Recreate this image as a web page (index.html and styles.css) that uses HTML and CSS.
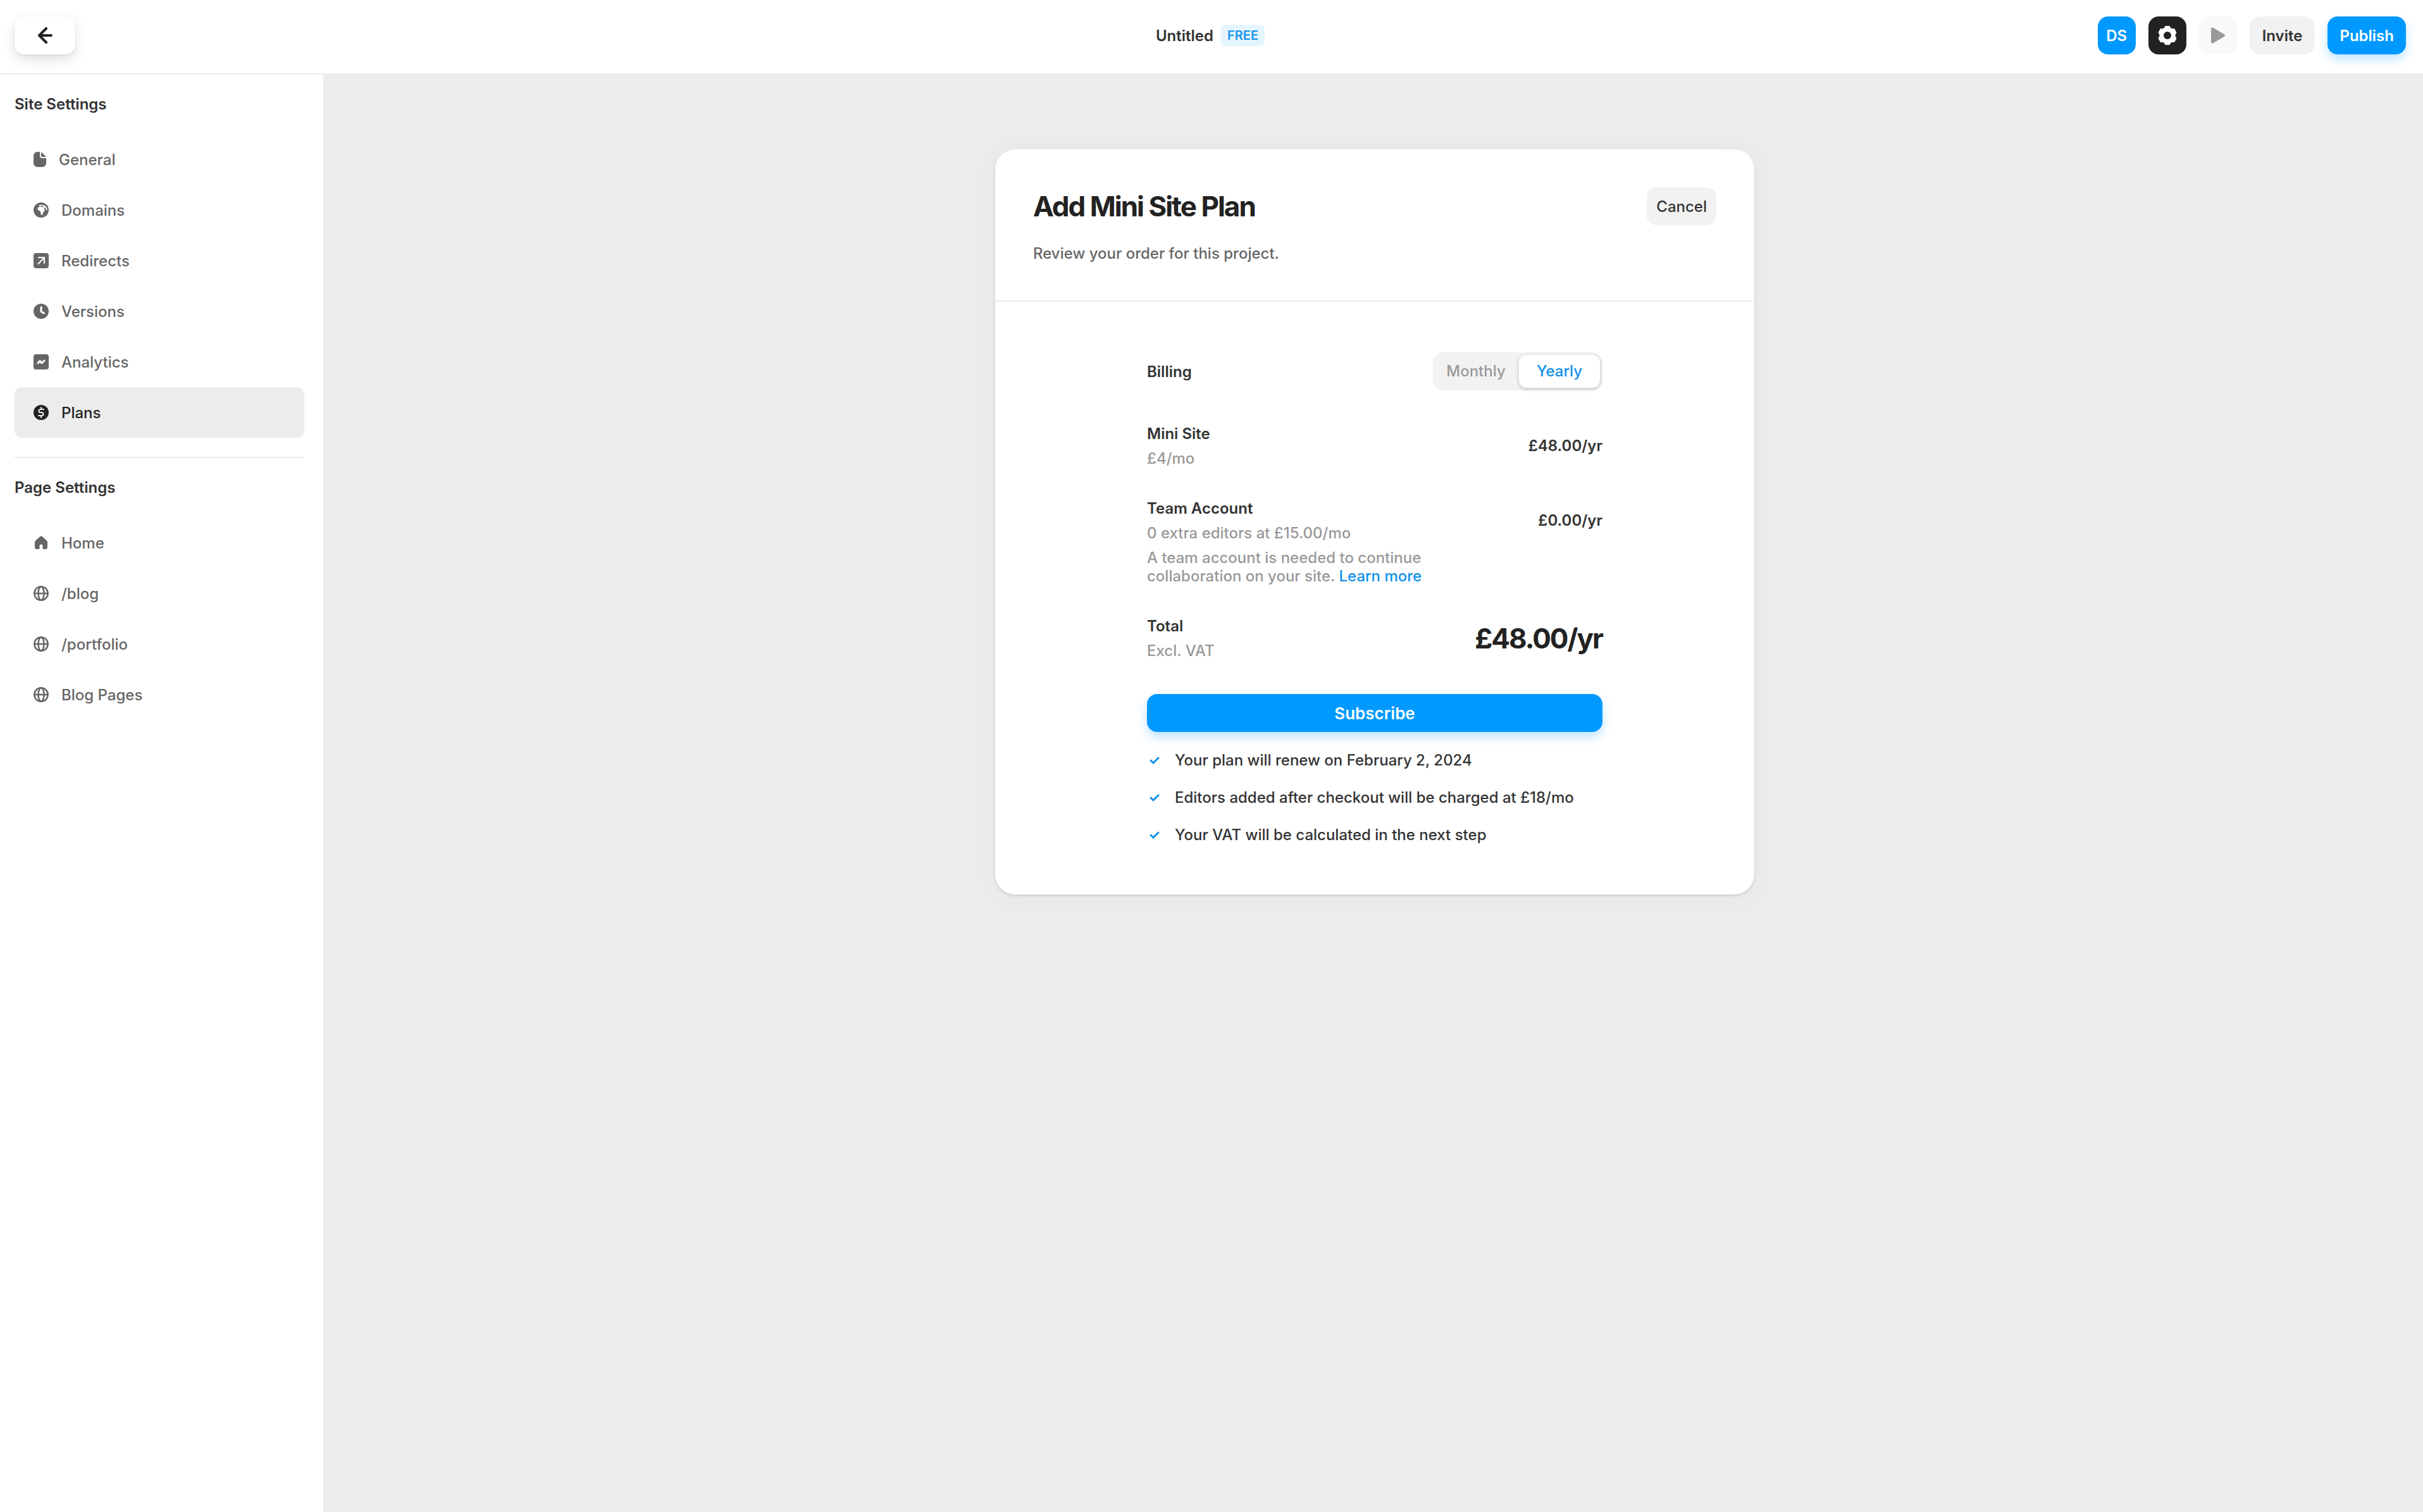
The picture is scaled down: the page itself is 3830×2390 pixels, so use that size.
FILE: index.html
```html
<!DOCTYPE html>
<html lang="en">
<head>
    <meta charset="UTF-8">
    <meta name="viewport" content="width=device-width, initial-scale=1.0">
    <title>Untitled - Plans</title>
    <link rel="stylesheet" href="styles.css">
</head>
<body>
    <header class="topbar">
        <button type="button" class="back" aria-label="Back">
            <svg width="24" height="26" viewBox="0 0 24 26" fill="none" stroke="#222" stroke-width="4" stroke-linecap="round" stroke-linejoin="round"><path d="M14 2L3 13l11 11M4 13h18"/></svg>
        </button>
        <div class="project">
            <span class="project-name">Untitled</span>
            <span class="badge">FREE</span>
        </div>
        <div class="actions">
            <button type="button" class="btn square blue">DS</button>
            <button type="button" class="btn square dark" aria-label="Settings">
                <svg width="32" height="32" viewBox="-16 -16 32 32"><path fill="#fff" stroke="#fff" stroke-width="2" stroke-linejoin="round" d="M-3-14H3Q4.600-8.600 10.400-10L13.400-4.500Q9.400 0 13.400 4.500L10.400 10Q4.600 8.600 3 14H-3Q-4.600 8.600-10.400 10L-13.400 4.500Q-9.400 0-13.400-4.500L-10.400-10Q-4.600-8.600-3-14z"/><circle r="6" fill="#222"/></svg>
            </button>
            <button type="button" class="btn square faint" aria-label="Preview">
                <svg width="24" height="26" viewBox="0 0 24 26"><path fill="#999" stroke="#999" stroke-width="4" stroke-linejoin="round" d="M3 2.500v21L21 13z"/></svg>
            </button>
            <button type="button" class="btn grey">Invite</button>
            <button type="button" class="btn blue raised">Publish</button>
        </div>
    </header>

    <div class="page">
        <aside class="sidebar">
            <h2>Site Settings</h2>
            <nav aria-label="Site Settings">
                <a href="#general">
                    <svg width="20" height="24" viewBox="0 0 20 24" fill="currentColor"><path d="M10 0v6a4 4 0 0 0 4 4h6v8a6 6 0 0 1-6 6H6a6 6 0 0 1-6-6V6a6 6 0 0 1 6-6z"/><path d="M12 0l8 8h-6a2 2 0 0 1-2-2z"/></svg>
                    General
                </a>
                <a href="#domains">
                    <svg width="24" height="24" viewBox="0 0 24 24"><circle cx="12" cy="12" r="12" fill="currentColor"/><path fill="#fff" d="M9 4q5-1 8.500.7Q21.500 7.500 22 12.500l-1.500-.5-2.500-4.500-1.500 2 1.700 2.500-2.700 3.500-1 3-1.500 1.500-1.500-1.500-.5-4.500-4-2-.7-3L9 6.500l3 .2 3 .7 1.500-.9-2-1-5.500.2z"/></svg>
                    Domains
                </a>
                <a href="#redirects">
                    <svg width="24" height="24" viewBox="0 0 24 24"><rect width="24" height="24" rx="4" fill="currentColor"/><path fill="none" stroke="#fff" stroke-width="2" stroke-linecap="round" stroke-linejoin="round" d="M8 7h9v9M17 7L7.500 17"/></svg>
                    Redirects
                </a>
                <a href="#versions">
                    <svg width="24" height="24" viewBox="0 0 24 24"><circle cx="12" cy="12" r="12" fill="currentColor"/><path fill="none" stroke="#fff" stroke-width="3" stroke-linecap="round" stroke-linejoin="round" d="M12 5.500V12.500l4.500 2.500"/></svg>
                    Versions
                </a>
                <a href="#analytics">
                    <svg width="24" height="24" viewBox="0 0 24 24"><rect width="24" height="24" rx="4" fill="currentColor"/><path fill="none" stroke="#fff" stroke-width="3" stroke-linecap="round" stroke-linejoin="round" d="M7 14l3-3.500 3 3.500 4-4"/></svg>
                    Analytics
                </a>
                <a href="#plans" class="active" aria-current="page">
                    <svg width="24" height="24" viewBox="0 0 24 24"><circle cx="12" cy="12" r="12" fill="currentColor"/><path fill="none" stroke="#ececec" stroke-width="2" stroke-linecap="round" stroke-linejoin="round" d="M12 4v3M12 17v3M16 7h-5a2.500 2.500 0 0 0 0 5h2a2.500 2.500 0 0 1 0 5H8"/></svg>
                    Plans
                </a>
            </nav>
            <h2 class="divided">Page Settings</h2>
            <nav aria-label="Page Settings">
                <a href="#home">
                    <svg width="24" height="24" viewBox="0 0 24 24"><path fill="currentColor" d="M10 2.300a3 3 0 0 1 4 0l7 6.500q1 1 1 2.500V19a3 3 0 0 1-3 3h-3a1.500 1.500 0 0 1-1.500-1.500V17a2.500 2.500 0 0 0-5 0v3.500A1.500 1.500 0 0 1 8 22H5a3 3 0 0 1-3-3v-7.700q0-1.500 1-2.500z"/></svg>
                    Home
                </a>
                <a href="#blog">
                    <svg width="24" height="24" viewBox="0 0 24 24" fill="none" stroke="currentColor" stroke-width="2.500"><circle cx="12" cy="12" r="10.700"/><ellipse cx="12" cy="12" rx="4.500" ry="10.700"/><path d="M1 12h22"/></svg>
                    /blog
                </a>
                <a href="#portfolio">
                    <svg width="24" height="24" viewBox="0 0 24 24" fill="none" stroke="currentColor" stroke-width="2.500"><circle cx="12" cy="12" r="10.700"/><ellipse cx="12" cy="12" rx="4.500" ry="10.700"/><path d="M1 12h22"/></svg>
                    /portfolio
                </a>
                <a href="#blog-pages">
                    <svg width="24" height="24" viewBox="0 0 24 24" fill="none" stroke="currentColor" stroke-width="2.500"><circle cx="12" cy="12" r="10.700"/><ellipse cx="12" cy="12" rx="4.500" ry="10.700"/><path d="M1 12h22"/></svg>
                    Blog Pages
                </a>
            </nav>
        </aside>

        <main class="content">
            <form class="card">
                <div class="card-header">
                    <div class="card-title">
                        <h1>Add Mini Site Plan</h1>
                        <button type="button" class="btn grey cancel">Cancel</button>
                    </div>
                    <p>Review your order for this project.</p>
                </div>
                <div class="card-body">
                    <div class="billing" role="radiogroup" aria-labelledby="billing-label">
                        <strong id="billing-label">Billing</strong>
                        <div class="toggle">
                            <input type="radio" name="billing" id="monthly" value="monthly">
                            <label for="monthly">Monthly</label>
                            <input type="radio" name="billing" id="yearly" value="yearly" checked>
                            <label for="yearly">Yearly</label>
                        </div>
                    </div>

                    <div class="order">
                        <div class="row">
                            <div class="item">
                                <strong>Mini Site</strong>
                                <span>£4/mo</span>
                            </div>
                            <strong class="price">£48.00/yr</strong>
                        </div>
                        <div class="row">
                            <div class="item">
                                <strong>Team Account</strong>
                                <span>0 extra editors at £15.00/mo</span>
                                <p>A team account is needed to continue collaboration on your site. <a href="#learn-more">Learn more</a></p>
                            </div>
                            <strong class="price">£0.00/yr</strong>
                        </div>
                        <div class="row">
                            <div class="item">
                                <strong>Total</strong>
                                <span>Excl. VAT</span>
                            </div>
                            <strong class="price total">£48.00/yr</strong>
                        </div>
                    </div>

                    <button type="submit" class="btn blue raised subscribe">Subscribe</button>

                    <ul class="notes">
                        <li>
                            <svg width="24" height="24" viewBox="0 0 24 24"><path d="M6 12l4 4 8-8"/></svg>
                            Your plan will renew on February 2, 2024
                        </li>
                        <li>
                            <svg width="24" height="24" viewBox="0 0 24 24"><path d="M6 12l4 4 8-8"/></svg>
                            Editors added after checkout will be charged at £18/mo
                        </li>
                        <li>
                            <svg width="24" height="24" viewBox="0 0 24 24"><path d="M6 12l4 4 8-8"/></svg>
                            Your VAT will be calculated in the next step
                        </li>
                    </ul>
                </div>
            </form>
        </main>
    </div>
</body>
</html>
```
FILE: styles.css
```css
* {
    box-sizing: border-box;
}
body {
    margin: 0;
    min-height: 100vh;
    display: flex;
    flex-direction: column;
    background-color: #fff;
    color: #333;
    font-family: Inter, "Liberation Sans", sans-serif;
    font-size: 24px;
    font-weight: 500;
    line-height: 29px;
}
h1, h2, p, ul {
    margin: 0;
}
strong {
    font-weight: 600;
}
svg {
    display: block;
    flex-shrink: 0;
}

/* Top bar */
.topbar {
    display: grid;
    grid-template-columns: 1fr auto 1fr;
    align-items: center;
    padding: 26px 27px 30px 23px;
    border-bottom: 2px solid #ececec;
}
.back {
    display: flex;
    align-items: center;
    justify-content: center;
    width: 96px;
    height: 60px;
    padding: 0;
    border: none;
    border-radius: 16px;
    background-color: #fff;
    box-shadow: 0 8px 20px rgba(0,0,0,0.12), 0 2px 4px rgba(0,0,0,0.05);
    cursor: pointer;
}
.project {
    display: flex;
    align-items: center;
    gap: 12px;
}
.project-name {
    font-weight: 600;
}
.badge {
    padding: 3px 10px;
    border-radius: 8px;
    background-color: #e5f5ff;
    color: #1a96ec;
    font-size: 20px;
    font-weight: 600;
    line-height: 28px;
}
.actions {
    display: flex;
    justify-content: flex-end;
    gap: 20px;
}
.btn {
    display: flex;
    align-items: center;
    justify-content: center;
    height: 60px;
    padding: 0 20px;
    border: none;
    border-radius: 16px;
    color: #333;
    font-family: inherit;
    font-size: 24px;
    font-weight: 600;
    cursor: pointer;
}
.square {
    width: 60px;
    padding: 0;
}
.blue {
    background-color: #0099ff;
    color: #fff;
}
.dark {
    background-color: #222;
}
.grey {
    background-color: #f2f2f2;
}
.faint {
    background-color: #f9f9f9;
}
.raised {
    padding: 0 19px;
    box-shadow: 0 8px 16px rgba(0,153,255,0.25);
}

/* Sidebar */
.page {
    flex: 1;
    display: flex;
}
.sidebar {
    width: 511px;
    flex-shrink: 0;
    padding: 0 30px 30px 23px;
}
.sidebar h2 {
    font-size: 24px;
    font-weight: 600;
    line-height: 94px;
}
.sidebar .divided {
    margin-top: 30px;
    border-top: 2px solid #ececec;
}
.sidebar a {
    display: flex;
    align-items: center;
    gap: 20px;
    height: 80px;
    padding: 0 30px;
    border-radius: 12px;
    color: #666;
    text-decoration: none;
}
.sidebar .active {
    background-color: #ececec;
    color: #222;
}

/* Order card */
.content {
    flex: 1;
    padding: 118px 24px 118px 29px;
    background-color: #ececec;
}
.card {
    max-width: 1200px;
    margin: 0 auto;
    border-radius: 32px;
    background-color: #fff;
    box-shadow: 0 2px 4px rgba(0,0,0,0.12), 0 4px 40px rgba(0,0,0,0.03);
}
.card-header {
    padding: 60px;
    border-bottom: 2px solid #ececec;
    color: #666;
}
.card-title {
    display: flex;
    align-items: center;
    justify-content: space-between;
    margin-bottom: 30px;
}
.card-title h1 {
    color: #222;
    font-size: 44px;
    font-weight: 700;
    line-height: 60px;
    letter-spacing: -2px;
}
.cancel {
    padding: 0 15px;
    font-weight: 500;
}
.card-body {
    max-width: 720px;
    margin: 0 auto;
    padding: 80px 0;
}
.billing {
    display: flex;
    align-items: center;
    justify-content: space-between;
}
.toggle {
    position: relative;
    display: flex;
    gap: 4px;
    padding: 4px;
    border-radius: 16px;
    background-color: #f2f2f2;
}
.toggle input {
    position: absolute;
    opacity: 0;
}
.toggle label {
    width: 128px;
    border-radius: 12px;
    color: #999;
    line-height: 52px;
    text-align: center;
    cursor: pointer;
}
.toggle input:checked + label {
    background-color: #fff;
    box-shadow: 0 2px 6px rgba(0,0,0,0.2);
    color: #0f90ea;
}
.order {
    display: flex;
    flex-direction: column;
    gap: 50px;
    padding: 54px 0;
}
.row {
    display: flex;
    justify-content: space-between;
}
.item {
    display: flex;
    flex-direction: column;
    gap: 10px;
    max-width: 450px;
    color: #999;
}
.item strong {
    color: #333;
}
.item a {
    color: #0f90ea;
    text-decoration: none;
}
.price {
    line-height: 68px;
}
.total {
    color: #222;
    font-size: 44px;
    font-weight: 700;
    letter-spacing: -2px;
}
.subscribe {
    width: 100%;
    font-size: 26px;
}
.notes {
    display: flex;
    flex-direction: column;
    gap: 30px;
    margin-top: 30px;
    padding: 0;
    list-style: none;
}
.notes li {
    display: flex;
    align-items: center;
    gap: 20px;
}
.notes path {
    fill: none;
    stroke: #0f90ea;
    stroke-width: 3;
    stroke-linecap: round;
    stroke-linejoin: round;
}
```
